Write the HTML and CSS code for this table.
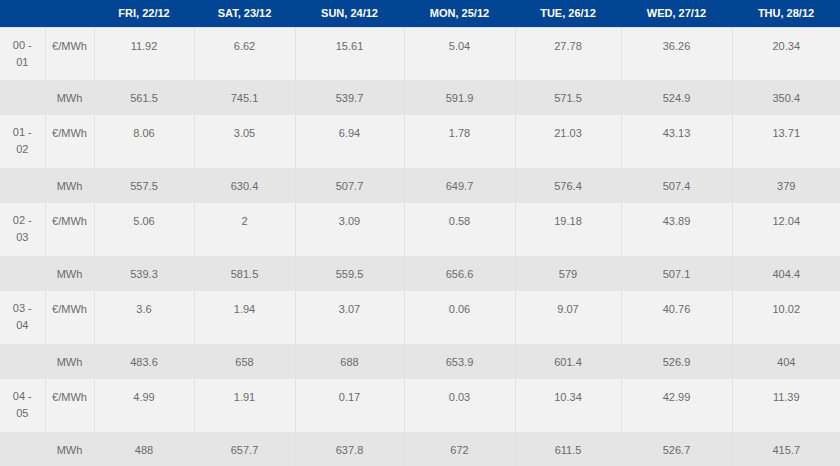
FILE: index.html
```html
<!DOCTYPE html>
<html>
<head>
<meta charset="utf-8">
<link rel="stylesheet" href="styles.css">
</head>
<body>
<table class="grid">
<colgroup>
<col class="c-hour"><col class="c-unit"><col class="c-fri"><col class="c-sat"><col class="c-sun"><col class="c-mon"><col class="c-tue"><col class="c-wed"><col class="c-thu">
</colgroup>
<thead>
<tr><th></th><th></th><th>FRI, 22/12</th><th>SAT, 23/12</th><th>SUN, 24/12</th><th>MON, 25/12</th><th>TUE, 26/12</th><th>WED, 27/12</th><th>THU, 28/12</th></tr>
</thead>
<tbody>
<tr class="price"><td class="hour">00 - 01</td><td>€/MWh</td><td>11.92</td><td>6.62</td><td>15.61</td><td>5.04</td><td>27.78</td><td>36.26</td><td>20.34</td></tr>
<tr class="vol"><td></td><td>MWh</td><td>561.5</td><td>745.1</td><td>539.7</td><td>591.9</td><td>571.5</td><td>524.9</td><td>350.4</td></tr>
<tr class="price"><td class="hour">01 - 02</td><td>€/MWh</td><td>8.06</td><td>3.05</td><td>6.94</td><td>1.78</td><td>21.03</td><td>43.13</td><td>13.71</td></tr>
<tr class="vol"><td></td><td>MWh</td><td>557.5</td><td>630.4</td><td>507.7</td><td>649.7</td><td>576.4</td><td>507.4</td><td>379</td></tr>
<tr class="price"><td class="hour">02 - 03</td><td>€/MWh</td><td>5.06</td><td>2</td><td>3.09</td><td>0.58</td><td>19.18</td><td>43.89</td><td>12.04</td></tr>
<tr class="vol"><td></td><td>MWh</td><td>539.3</td><td>581.5</td><td>559.5</td><td>656.6</td><td>579</td><td>507.1</td><td>404.4</td></tr>
<tr class="price"><td class="hour">03 - 04</td><td>€/MWh</td><td>3.6</td><td>1.94</td><td>3.07</td><td>0.06</td><td>9.07</td><td>40.76</td><td>10.02</td></tr>
<tr class="vol"><td></td><td>MWh</td><td>483.6</td><td>658</td><td>688</td><td>653.9</td><td>601.4</td><td>526.9</td><td>404</td></tr>
<tr class="price"><td class="hour">04 - 05</td><td>€/MWh</td><td>4.99</td><td>1.91</td><td>0.17</td><td>0.03</td><td>10.34</td><td>42.99</td><td>11.39</td></tr>
<tr class="vol"><td></td><td>MWh</td><td>488</td><td>657.7</td><td>637.8</td><td>672</td><td>611.5</td><td>526.7</td><td>415.7</td></tr>
</tbody>
</table>
</body>
</html>
```
FILE: styles.css
```css
html, body {
  margin: 0;
  padding: 0;
  background: #ffffff;
}
.grid {
  width: 840px;
  table-layout: fixed;
  border-collapse: collapse;
  font-family: "Liberation Sans", Arial, sans-serif;
  font-size: 11px;
  color: #6a6a6a;
}
.c-hour { width: 45px; }
.c-unit { width: 49px; }
.c-fri { width: 100px; }
.c-sat { width: 101px; }
.c-sun { width: 109px; }
.c-mon { width: 111px; }
.c-tue { width: 106px; }
.c-wed { width: 111px; }
.c-thu { width: 108px; }
.grid thead th {
  background: #024494;
  color: #ffffff;
  font-weight: bold;
  height: 27px;
  padding: 0;
  text-align: center;
  vertical-align: middle;
  border-bottom: 1px solid #d9e2ee;
  box-sizing: border-box;
}
.grid td {
  padding: 0 4px;
  text-align: center;
  border-left: 1px solid #e2e2e2;
  line-height: 18px;
}
.grid td:first-child {
  border-left: none;
}
.price td {
  background: #f2f2f2;
  height: 53px;
  box-sizing: border-box;
  vertical-align: top;
  padding-top: 9px;
}
.vol td {
  background: #e5e5e5;
  height: 35px;
  box-sizing: border-box;
  vertical-align: middle;
}
.price td.hour {
  padding: 9px 10px 0;
  line-height: 17px;
}
```
